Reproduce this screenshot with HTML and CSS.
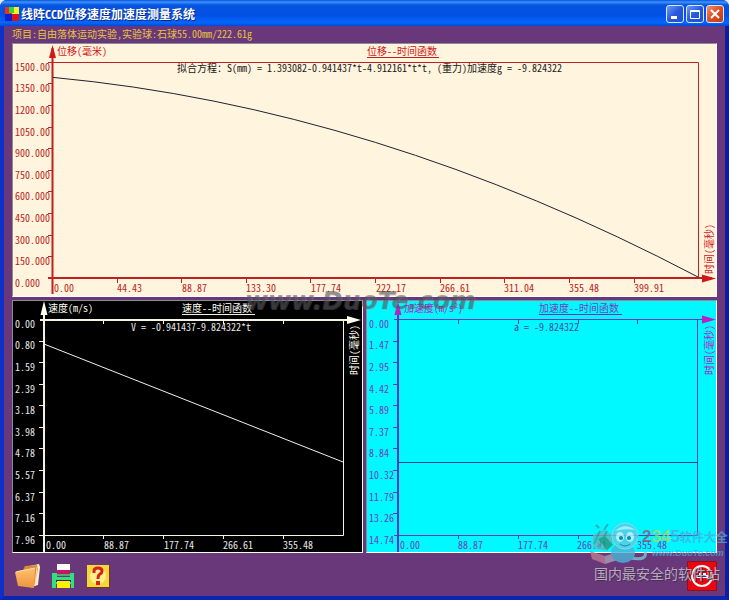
FILE: index.html
```html
<!DOCTYPE html>
<html lang="zh-CN">
<head>
  <meta charset="UTF-8" />
  <meta name="viewport" content="width=device-width, initial-scale=1.0" />
  <title>线阵CCD位移速度加速度测量系统</title>
  <link rel="stylesheet" href="styles.css">
</head>
<body>
<div class="window">
  <header class="titlebar">
    <svg class="app-icon" viewBox="0 0 14 14" aria-hidden="true">
      <path fill="#f03018" d="M0 0h7v7H0z"/><path fill="#f8f020" d="M7 0h7v7H7z"/>
      <path fill="#1020c8" d="M0 7h7v7H0z"/><path fill="#e01020" d="M7 7h7v7H7z"/>
      <path fill="#30d840" d="M4 0h5v6H4z"/>
    </svg>
    <h1>线阵CCD位移速度加速度测量系统</h1>
    <button class="ctl" type="button" aria-label="最小化"><svg viewBox="0 0 16 16"><path fill="#fff" d="M4 10h6v3H4z"/></svg></button>
    <button class="ctl" type="button" aria-label="最大化"><svg viewBox="0 0 16 16"><path fill="none" stroke="#fff" d="M3.500 4.500h9v8h-9zM3.500 5.500h9"/></svg></button>
    <button class="ctl close" type="button" aria-label="关闭"><svg viewBox="0 0 16 16"><path stroke="#fff" stroke-width="2" d="M4 4l8 8M12 4l-8 8"/></svg></button>
  </header>

  <main>
    <p class="project">项目:自由落体运动实验,实验球:石球55.00mm/222.61g</p>

    <div class="charts">
      <!-- 位移 -->
      <section class="panel distance">
        <svg viewBox="13 44 703 252" role="img" aria-label="位移--时间函数">
          <path class="thin" d="M52 62.500H698.500V278"/>
          <path class="axis" d="M52.500 48V294M48 278H712"/>
          <path class="arrow" d="M52.500 45l3.500 13h-7zM716 278.500l-14-4v8z"/>
          <path class="thin" d="M48 62.500h4M48 83.500h4M48 105.500h4M48 127.500h4M48 148.500h4M48 170.500h4M48 191.500h4M48 213.500h4M48 235.500h4M48 256.500h4M117.500 278v5M181.500 278v5M246.500 278v5M310.500 278v5M375.500 278v5M440.500 278v5M504.500 278v5M569.500 278v5M634.500 278v5"/>
          <path class="curve" d="M53 77.400Q375 107.500 698 277"/>
          <text x="57" y="55">位移(毫米)</text>
          <text class="name" x="367" y="55">位移--时间函数</text>
          <path class="thin" d="M367 57.500h72"/>
          <text class="formula" x="177" y="72">拟合方程：S(mm) = 1.393082-0.941437*t-4.912161*t*t, (重力)加速度g = -9.824322</text>
          <g class="scale">
            <text x="15" y="71">1500.00</text>
            <text x="15" y="92">1350.00</text>
            <text x="15" y="114">1200.00</text>
            <text x="15" y="136">1050.00</text>
            <text x="15" y="157">900.000</text>
            <text x="15" y="179">750.000</text>
            <text x="15" y="200">600.000</text>
            <text x="15" y="222">450.000</text>
            <text x="15" y="244">300.000</text>
            <text x="15" y="265">150.000</text>
            <text x="15" y="287">0.000</text>
            <text x="54" y="292">0.00</text>
            <text x="117" y="292">44.43</text>
            <text x="182" y="292">88.87</text>
            <text x="246" y="292">133.30</text>
            <text x="311" y="292">177.74</text>
            <text x="376" y="292">222.17</text>
            <text x="440" y="292">266.61</text>
            <text x="504" y="292">311.04</text>
            <text x="569" y="292">355.48</text>
            <text x="634" y="292">399.91</text>
          </g>
          <text transform="translate(713 274) rotate(-90)">时间(毫秒)</text>
        </svg>
      </section>

      <!-- 速度 -->
      <section class="panel speed">
        <svg viewBox="13 301 349 251" role="img" aria-label="速度--时间函数">
          <path class="thin" d="M44 535.500H343.500V320"/>
          <path class="axis" d="M44 305V552M40 320H350"/>
          <path class="arrow" d="M44 301l3.500 14h-7zM361 320l-14-4v8z"/>
          <path class="thin" d="M39 341.500h5M39 362.500h5M39 384.500h5M39 405.500h5M39 427.500h5M39 448.500h5M39 470.500h5M39 492.500h5M39 513.500h5M39 535.500h5M103.500 320v4M163.500 320v4M223.500 320v4M283.500 320v4M103.500 535v4M163.500 535v4M223.500 535v4M283.500 535v4"/>
          <path class="curve" d="M44 344L343 462"/>
          <text x="48" y="312">速度(m/s)</text>
          <text class="name" x="182" y="312">速度--时间函数</text>
          <path class="thin" d="M182 314.500h73"/>
          <text class="formula" x="131" y="331">V = -0.941437-9.824322*t</text>
          <g class="scale">
            <text x="15" y="328">0.00</text>
            <text x="15" y="349">0.80</text>
            <text x="15" y="371">1.59</text>
            <text x="15" y="393">2.39</text>
            <text x="15" y="414">3.18</text>
            <text x="15" y="436">3.98</text>
            <text x="15" y="457">4.78</text>
            <text x="15" y="479">5.57</text>
            <text x="15" y="501">6.37</text>
            <text x="15" y="522">7.16</text>
            <text x="15" y="544">7.96</text>
            <text x="46" y="549">0.00</text>
            <text x="104" y="549">88.87</text>
            <text x="164" y="549">177.74</text>
            <text x="223" y="549">266.61</text>
            <text x="283" y="549">355.48</text>
          </g>
          <text transform="translate(358 375) rotate(-90)">时间(毫秒)</text>
        </svg>
      </section>

      <!-- 加速度 -->
      <section class="panel accel">
        <svg viewBox="367 301 349 251" role="img" aria-label="加速度--时间函数">
          <path class="thin" d="M394 535.500H697.500V320M394 319.500H706"/>
          <path class="axis" d="M398 305V552"/>
          <path class="arrow" d="M398 301l3.500 14h-7zM716 319.500l-14-4v8z"/>
          <path class="thin" d="M393 341.500h5M393 362.500h5M393 384.500h5M393 405.500h5M393 427.500h5M393 448.500h5M393 470.500h5M393 492.500h5M393 513.500h5M458.500 320v4M518.500 320v4M578.500 320v4M637.500 320v4M458.500 535v4M518.500 535v4M578.500 535v4M637.500 535v4"/>
          <path class="curve" d="M398 462.500H698"/>
          <text x="404" y="312">加速度(m/s²)</text>
          <text class="name" x="539" y="312">加速度--时间函数</text>
          <path class="thin" d="M539 314.500h83"/>
          <text class="formula" x="514" y="331">a = -9.824322</text>
          <g class="scale">
            <text x="369" y="328">0.00</text>
            <text x="369" y="349">1.47</text>
            <text x="369" y="371">2.95</text>
            <text x="369" y="393">4.42</text>
            <text x="369" y="414">5.89</text>
            <text x="369" y="436">7.37</text>
            <text x="369" y="457">8.84</text>
            <text x="369" y="479">10.32</text>
            <text x="369" y="501">11.79</text>
            <text x="369" y="522">13.26</text>
            <text x="369" y="544">14.74</text>
            <text x="400" y="549">0.00</text>
            <text x="458" y="549">88.87</text>
            <text x="518" y="549">177.74</text>
            <text x="577" y="549">266.61</text>
            <text x="637" y="549">355.48</text>
          </g>
          <text transform="translate(713 375) rotate(-90)">时间(毫秒)</text>
        </svg>
      </section>

      <div class="mark-center">www.DuoTe.com</div>
    </div>
  </main>

  <footer class="toolbar">
    <button type="button" aria-label="打开">
      <svg viewBox="0 0 26 26">
        <path fill="#fff0c8" d="M10 4l14-3 1 3-2 18-7 2z"/>
        <path fill="#d98a3c" d="M2 8l6-1 2-4 12-1 1 4-4 18-3 1z"/>
        <path fill="url(#folder)" d="M0 9l20-4-1 20-16-2z"/>
        <path fill="none" stroke="#ffe0a8" d="M1 9l19-4M22 4l-2 19"/>
        <defs><linearGradient id="folder" x2="0" y2="1"><stop stop-color="#ffc070"/><stop offset="1" stop-color="#ed943e"/></linearGradient></defs>
      </svg>
    </button>
    <button type="button" aria-label="打印">
      <svg viewBox="0 0 26 26">
        <path fill="#30df7d" d="M2 10h5v4h13v-4h4v15h-3v-4H6v4H2z"/>
        <path fill="#fff" d="M7 1h13v6H7z"/>
        <path fill="#ca1463" d="M7 7h13v4H7z"/>
        <path fill="#55a878" d="M7 11h13v2H7z"/>
        <path fill="#402050" d="M6 17h15v2H6z"/>
        <path fill="#ffef00" d="M7 18h13v7H7z"/>
      </svg>
    </button>
    <button type="button" aria-label="帮助">
      <svg viewBox="0 0 26 26">
        <path fill="#803020" d="M2 2h23v23H2z"/>
        <path fill="#f4d838" d="M2 2h22v22H2z"/>
        <circle cx="13" cy="13" r="8" fill="#fff08c"/>
        <path fill="none" stroke="#d8201c" stroke-width="3" d="M9 10V8q0-3 4-3t4 3q0 2-2 3t-2 5"/>
        <path fill="#d8201c" d="M11 18h4v4h-4z"/>
      </svg>
    </button>
    <button class="stop" type="button" aria-label="退出">
      <svg viewBox="0 0 30 30">
        <path fill="#e80810" stroke="#901020" d="M.5.5h29v29H.5z"/>
        <circle cx="15" cy="15" r="10" fill="none" stroke="#fff" stroke-width="2"/>
        <path fill="#fff" d="M9 14h12v3H9zM12 12h2v2h-2zM16 12h3v2h-3z"/>
      </svg>
    </button>
  </footer>

  <div class="mark-corner">
    <svg class="mascot" viewBox="0 0 60 42" aria-hidden="true">
      <path fill="#bc7c94" d="M0 29l15 5v8L2 37z"/>
      <path fill="#a8a0b8" d="M15 34l16-5v8l-16 5z"/>
      <path fill="#62b8bd" d="M3 13l10-5 13 7-9 14-14-3z"/>
      <path fill="none" stroke="#3b9ca8" stroke-width="2" d="M4 22l6-13M9 25l8-16M14 8l4-6M9 6L6 3"/>
      <path fill="#299579" d="M8 17l7-3 8 9-6 5z"/>
      <path fill="none" stroke="#79c7d3" stroke-width="3" d="M40 36q18 3 15-6"/>
      <ellipse cx="33" cy="31" rx="12" ry="10" fill="#4cb5d8"/>
      <circle cx="35" cy="14" r="13" fill="#62c8e6" stroke="#9adbe7"/>
      <path fill="#b8f2f7" d="M25 9q10-9 20-1-10-2-20 1z"/>
      <ellipse cx="30" cy="15" rx="4" ry="5" fill="#c8f8fa"/>
      <ellipse cx="40" cy="15" rx="4" ry="5" fill="#c8f8fa"/>
      <circle cx="31" cy="16" r="2" fill="#176b93"/><circle cx="39" cy="16" r="2" fill="#176b93"/>
      <path fill="none" stroke="#226f91" d="M30 22q5 4 10 0"/>
    </svg>
    <div class="brand">
      <b><i class="two">2</i><i class="three">34</i>5<span>软件大全</span></b>
      <small>www.DuoTe.com</small>
    </div>
    <div class="slogan">国内最安全的软件站</div>
  </div>
</div>
</body>
</html>
```
FILE: styles.css
```css
* {
  box-sizing: border-box;
}
body {
  margin: 0;
  background: #dfe8f4;
  font-family: "Noto Sans CJK SC", sans-serif;
  font-feature-settings: "hwid";
}
.window {
  position: relative;
  display: flex;
  flex-direction: column;
  min-height: 100vh;
  background: #69387a;
  border: 4px solid #0c30c8;
  border-top: 0;
  border-right-color: #0a1ea4;
  border-bottom-color: #0a24b4;
  border-radius: 7px 7px 0 0;
}
button {
  padding: 0;
  border: 0;
  background: none;
}
button svg {
  display: block;
  width: 100%;
}

/* title bar */
.titlebar {
  display: flex;
  align-items: center;
  gap: 2px;
  height: 26px;
  margin: 0 -4px;
  padding: 2px 5px 0;
  border-radius: 7px 7px 0 0;
  background: linear-gradient(to bottom, #0a50d8, #3c94ff 2px, #0754df 5px, #0250e4 15px, #0566fc 23px, #0348d0);
}
.app-icon {
  width: 14px;
  height: 14px;
}
h1 {
  flex: 1;
  margin: 0;
  color: #fff;
  font-size: 12px;
  line-height: 18px;
  text-shadow: 1px 1px #0a2880;
}
.ctl {
  width: 18px;
  height: 18px;
  border: 1px solid #dce8fc;
  border-radius: 3px;
  background: linear-gradient(135deg, #6e9cf8, #2858dc 50%, #1c50d0);
}
.close {
  background: linear-gradient(135deg, #ee9070, #dc4e24 50%, #c03c14);
}

/* charts */
main {
  padding: 0 8px;
}
.project {
  margin: 0;
  color: #e8c440;
  font-size: 10px;
  line-height: 15px;
  height: 17px;
}
.charts {
  position: relative;
  display: grid;
  grid-template-columns: 1fr 1fr;
  gap: 3px;
}
.panel {
  border: 1px solid #8c8c94;
  border-right-color: #fff;
  border-bottom-color: #fff;
}
.panel svg {
  display: block;
  width: 100%;
}
.panel text {
  font-size: 10px;
  white-space: pre;
  fill: var(--ink);
}
.panel .name {
  fill: var(--title);
}
.panel .formula {
  fill: var(--formula);
}
.panel .scale text {
  fill: var(--scale);
}
.thin, .axis, .curve {
  fill: none;
  stroke: var(--line);
}
.axis {
  stroke-width: 2;
}
.curve {
  stroke: var(--curve);
}
.arrow {
  fill: var(--ink);
}
.distance {
  grid-column: 1 / 3;
  background: #fff4de;
  --ink: #d01818;
  --title: #d01818;
  --line: #c02020;
  --scale: #b82420;
  --formula: #181818;
  --curve: #202030;
}
.speed {
  background: #000;
  --ink: #fffff0;
  --title: #fffff0;
  --line: #f4f4e0;
  --scale: #e8e8e8;
  --formula: #e8e8e8;
  --curve: #f0f0f0;
}
.accel {
  background: #00f8ff;
  --ink: #b820c8;
  --title: #8038c0;
  --line: #6038c0;
  --scale: #7040c0;
  --formula: #4848a0;
  --curve: #1840a0;
}

/* bottom buttons */
.toolbar {
  display: flex;
  align-items: center;
  gap: 9px;
  flex: 1;
  padding: 3px 8px 0 11px;
}
.toolbar button {
  width: 26px;
}
.toolbar .stop {
  width: 30px;
  margin-left: auto;
}

/* watermarks */
.mark-center {
  position: absolute;
  left: 33%;
  top: 244px;
  color: rgba(70, 70, 80, 0.5);
  font: italic bold 25px/28px "DejaVu Sans", sans-serif;
  text-shadow: 1px 1px rgba(150, 150, 150, 0.3);
}
.mark-corner {
  position: absolute;
  right: -4px;
  bottom: 14px;
  display: grid;
  grid-template-columns: 52px 87px;
  pointer-events: none;
}
.mascot {
  width: 60px;
  opacity: 0.8;
}
.brand {
  padding-top: 6px;
  opacity: 0.75;
  color: #4aa8dc;
}
.brand b {
  display: block;
  font: bold 17px/18px "Liberation Sans", "Noto Sans CJK SC", sans-serif;
  white-space: nowrap;
}
.brand span {
  font-size: 12px;
}
.brand i {
  font-style: normal;
}
.brand .two {
  color: #a04878;
}
.brand .three {
  color: #a8d860;
}
.brand small {
  display: block;
  padding-left: 10px;
  font: italic bold 9px/12px "Liberation Sans", sans-serif;
}
.slogan {
  grid-column: 1 / 3;
  padding-left: 4px;
  color: #b8a8c0;
  font-size: 14px;
  line-height: 18px;
  text-shadow: 1px 1px #483050;
  white-space: nowrap;
}
```
